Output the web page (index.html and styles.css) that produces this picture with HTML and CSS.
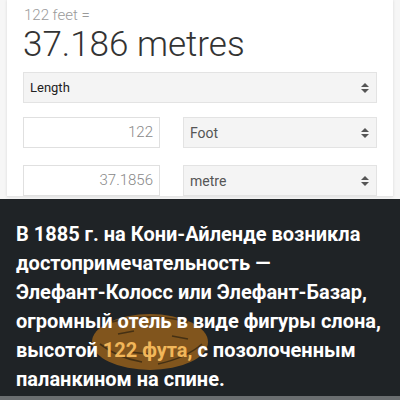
FILE: index.html
```html
<!DOCTYPE html>
<html>
<head>
<meta charset="utf-8">
<link rel="stylesheet" href="styles.css">
</head>
<body>
<div class="card">
  <div class="from">122 feet =</div>
  <div class="result">37.186 metres</div>
  <div class="select wide"><span>Length</span><span class="arrows"><svg width="8" height="12" viewBox="0 0 8 12"><path d="M0 5L4 1L8 5Z M0 7L4 11L8 7Z" fill="#555"/></svg></span></div>
  <div class="row">
    <div class="input">122</div>
    <div class="select"><span>Foot</span><span class="arrows"><svg width="8" height="12" viewBox="0 0 8 12"><path d="M0 5L4 1L8 5Z M0 7L4 11L8 7Z" fill="#555"/></svg></span></div>
  </div>
  <div class="row">
    <div class="input">37.1856</div>
    <div class="select"><span>metre</span><span class="arrows"><svg width="8" height="12" viewBox="0 0 8 12"><path d="M0 5L4 1L8 5Z M0 7L4 11L8 7Z" fill="#555"/></svg></span></div>
  </div>
</div>
<div class="panel">
  <svg class="scribble" width="120" height="60" viewBox="0 0 120 60">
    <ellipse cx="60" cy="30" rx="58" ry="28" fill="#8a5a1c" opacity="0.92"/>
    <path d="M22 10 Q60 0 98 10 M10 32 Q28 46 52 50 M68 52 Q96 46 112 32 M28 22 L44 19 M82 24 L98 27 M40 40 L58 42" stroke="#3b2a12" stroke-width="1.6" fill="none" opacity="0.85"/>
  </svg>
  <p class="text">В 1885 г. на Кони-Айленде возникла<br>достопримечательность —<br>Элефант-Колосс или Элефант-Базар,<br>огромный отель в виде фигуры слона,<br>высотой <span class="hl">122 фута,</span> с позолоченным<br>паланкином на спине.</p>
</div>
<div class="strip"></div>
</body>
</html>
```
FILE: styles.css
```css
html, body {
  margin: 0;
  padding: 0;
}
body {
  width: 400px;
  height: 400px;
  overflow: hidden;
  background: #f6f6f6;
  font-family: Roboto, "Noto Sans", sans-serif;
}
.card {
  margin: 0 7px;
  height: 197px;
  background: #fff;
  box-shadow: 0 0 3px rgba(0,0,0,0.12);
  padding: 6px 16px 0 16px;
  box-sizing: border-box;
  border-bottom: 1px solid #e6e6e6;
}
.from {
  font-size: 15px;
  font-weight: 300;
  color: #9a9a9a;
  line-height: 19px;
  padding-left: 1px;
}
.result {
  font-size: 35px;
  font-weight: 300;
  color: #333;
  line-height: 40px;
  margin-bottom: 7px;
}
.select {
  display: flex;
  align-items: center;
  justify-content: space-between;
  height: 31px;
  box-sizing: border-box;
  background: #f4f4f4;
  border: 1px solid #e3e3e3;
  padding: 0 7px 0 6px;
  font-size: 13px;
  color: #222;
}
.row .select {
  font-size: 14px;
  color: #555;
}
.arrows {
  display: flex;
  align-items: center;
}
.row {
  display: grid;
  grid-template-columns: 137px 1fr;
  column-gap: 23px;
  margin-top: 14px;
}
.row + .row {
  margin-top: 17px;
}
.input {
  height: 31px;
  box-sizing: border-box;
  border: 1px solid #e0e0e0;
  background: #fff;
  text-align: right;
  padding: 0 6px;
  line-height: 29px;
  font-size: 15px;
  font-weight: 300;
  color: #888;
}
.panel {
  position: relative;
  height: 197px;
  margin-top: 2px;
  background: #1f2326;
  padding: 21px 16px 0 16px;
  box-sizing: border-box;
}
.text {
  position: relative;
  margin: 0;
  font-size: 20px;
  font-weight: 700;
  line-height: 29px;
  color: #fff;
  white-space: nowrap;
}
.hl {
  color: #f2b75a;
}
.scribble {
  position: absolute;
  left: 90px;
  top: 113px;
}
.strip {
  height: 4px;
  background: #6a6e70;
}
```
